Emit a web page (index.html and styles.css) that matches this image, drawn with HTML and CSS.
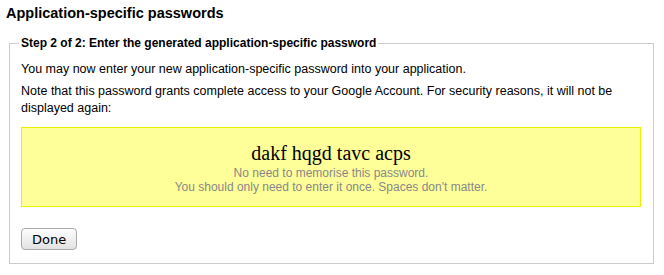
FILE: index.html
```html
<!DOCTYPE html>
<html lang="en">
<head>
  <meta charset="UTF-8" />
  <title>Application-specific passwords</title>
  <link rel="stylesheet" href="styles.css">
</head>
<body>

  <h2 class="page-title">Application-specific passwords</h2>

  <fieldset class="step">
    <legend>Step 2 of 2: Enter the generated application-specific password</legend>

    <p>You may now enter your new application-specific password into your application.</p>
    <p>Note that this password grants complete access to your Google Account. For security reasons, it will not be displayed again:</p>

    <div class="password-box">
      <div class="password">dakf hqgd tavc acps</div>
      <div class="hint">No need to memorise this password.</div>
      <div class="hint">You should only need to enter it once. Spaces don't matter.</div>
    </div>

    <button class="btn-done">Done</button>
  </fieldset>

</body>
</html>
```

FILE: styles.css
```css
* {
  box-sizing: border-box;
}

body {
  margin: 0;
  padding: 5px 6px;
  font-family: 'Liberation Sans', Arial, sans-serif;
  font-size: 12.5px;
  color: #000;
  background: #fff;
}

.page-title {
  font-size: 14.5px;
  line-height: 17px;
  font-weight: bold;
  margin: 0 0 14px 0;
}

.step {
  border: 1px solid #ccc;
  margin: 0 5px 0 3px;
  padding: 11px 12px 13px 11px;
  width: 645px;
}

.step legend {
  font-weight: bold;
  font-size: 12px;
  padding: 0 2px;
  margin-left: -2px;
}

.step p {
  margin: 0 0 5px 0;
  line-height: 17px;
}

.password-box {
  background-color: #ffff99;
  border: 1px solid #eeee00;
  text-align: center;
  padding: 13px 10px 12px;
  margin: 10px 0 21px 0;
}

.password {
  font-family: 'Liberation Serif', 'Times New Roman', serif;
  font-size: 20px;
  line-height: 24px;
  margin-bottom: 1px;
}

.hint {
  color: #888;
  font-size: 12px;
  line-height: 14px;
}

.btn-done {
  font-family: 'DejaVu Sans', sans-serif;
  font-size: 13px;
  height: 22px;
  padding: 0 10px;
  border: 1px solid #aaa;
  border-radius: 4px;
  background: linear-gradient(#fdfdfd, #e2e2e2);
  color: #000;
  display: block;
}
```
